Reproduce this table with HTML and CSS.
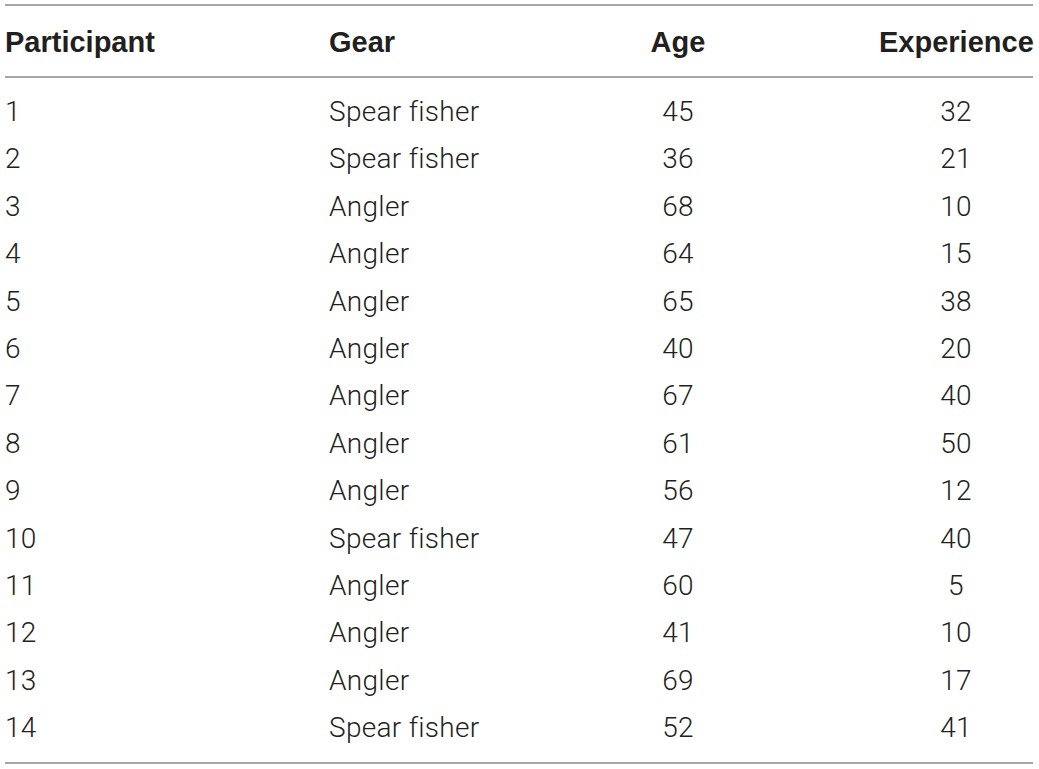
FILE: index.html
```html
<!DOCTYPE html>
<html lang="en">
<head>
<meta charset="utf-8">
<title>Participants</title>
<link rel="stylesheet" href="styles.css">
</head>
<body>
<div class="table">
  <div class="row head">
    <div class="cell">Participant</div>
    <div class="cell">Gear</div>
    <div class="cell num">Age</div>
    <div class="cell num">Experience</div>
  </div>
  <div class="tbody">
    <div class="row"><div class="cell">1</div><div class="cell">Spear fisher</div><div class="cell num">45</div><div class="cell num">32</div></div>
    <div class="row"><div class="cell">2</div><div class="cell">Spear fisher</div><div class="cell num">36</div><div class="cell num">21</div></div>
    <div class="row"><div class="cell">3</div><div class="cell">Angler</div><div class="cell num">68</div><div class="cell num">10</div></div>
    <div class="row"><div class="cell">4</div><div class="cell">Angler</div><div class="cell num">64</div><div class="cell num">15</div></div>
    <div class="row"><div class="cell">5</div><div class="cell">Angler</div><div class="cell num">65</div><div class="cell num">38</div></div>
    <div class="row"><div class="cell">6</div><div class="cell">Angler</div><div class="cell num">40</div><div class="cell num">20</div></div>
    <div class="row"><div class="cell">7</div><div class="cell">Angler</div><div class="cell num">67</div><div class="cell num">40</div></div>
    <div class="row"><div class="cell">8</div><div class="cell">Angler</div><div class="cell num">61</div><div class="cell num">50</div></div>
    <div class="row"><div class="cell">9</div><div class="cell">Angler</div><div class="cell num">56</div><div class="cell num">12</div></div>
    <div class="row"><div class="cell">10</div><div class="cell">Spear fisher</div><div class="cell num">47</div><div class="cell num">40</div></div>
    <div class="row"><div class="cell">11</div><div class="cell">Angler</div><div class="cell num">60</div><div class="cell num">5</div></div>
    <div class="row"><div class="cell">12</div><div class="cell">Angler</div><div class="cell num">41</div><div class="cell num">10</div></div>
    <div class="row"><div class="cell">13</div><div class="cell">Angler</div><div class="cell num">69</div><div class="cell num">17</div></div>
    <div class="row"><div class="cell">14</div><div class="cell">Spear fisher</div><div class="cell num">52</div><div class="cell num">41</div></div>
  </div>
</div>
</body>
</html>
```

FILE: styles.css
```css
html, body {
  margin: 0;
  padding: 0;
  background: #ffffff;
}

body {
  font-family: "Liberation Sans", Arial, Helvetica, sans-serif;
  color: #231f20;
}

.table {
  width: 1028px;
  margin: 4px 0 0 5px;
  border-top: 2px solid #a6a6a6;
  border-bottom: 2px solid #a6a6a6;
}

.row {
  display: grid;
  grid-template-columns: 324px 148px 402px 154px;
}

.head {
  font-weight: bold;
  font-size: 29px;
  line-height: 68px;
  padding-top: 2px;
  border-bottom: 2px solid #a6a6a6;
}

.tbody {
  padding: 10px 0;
  font-family: Roboto, "Liberation Sans", Arial, sans-serif;
  font-weight: 300;
  font-size: 28px;
  letter-spacing: 0.3px;
  line-height: 47.4px;
}

.cell {
  white-space: nowrap;
}

.num {
  text-align: center;
}
```
